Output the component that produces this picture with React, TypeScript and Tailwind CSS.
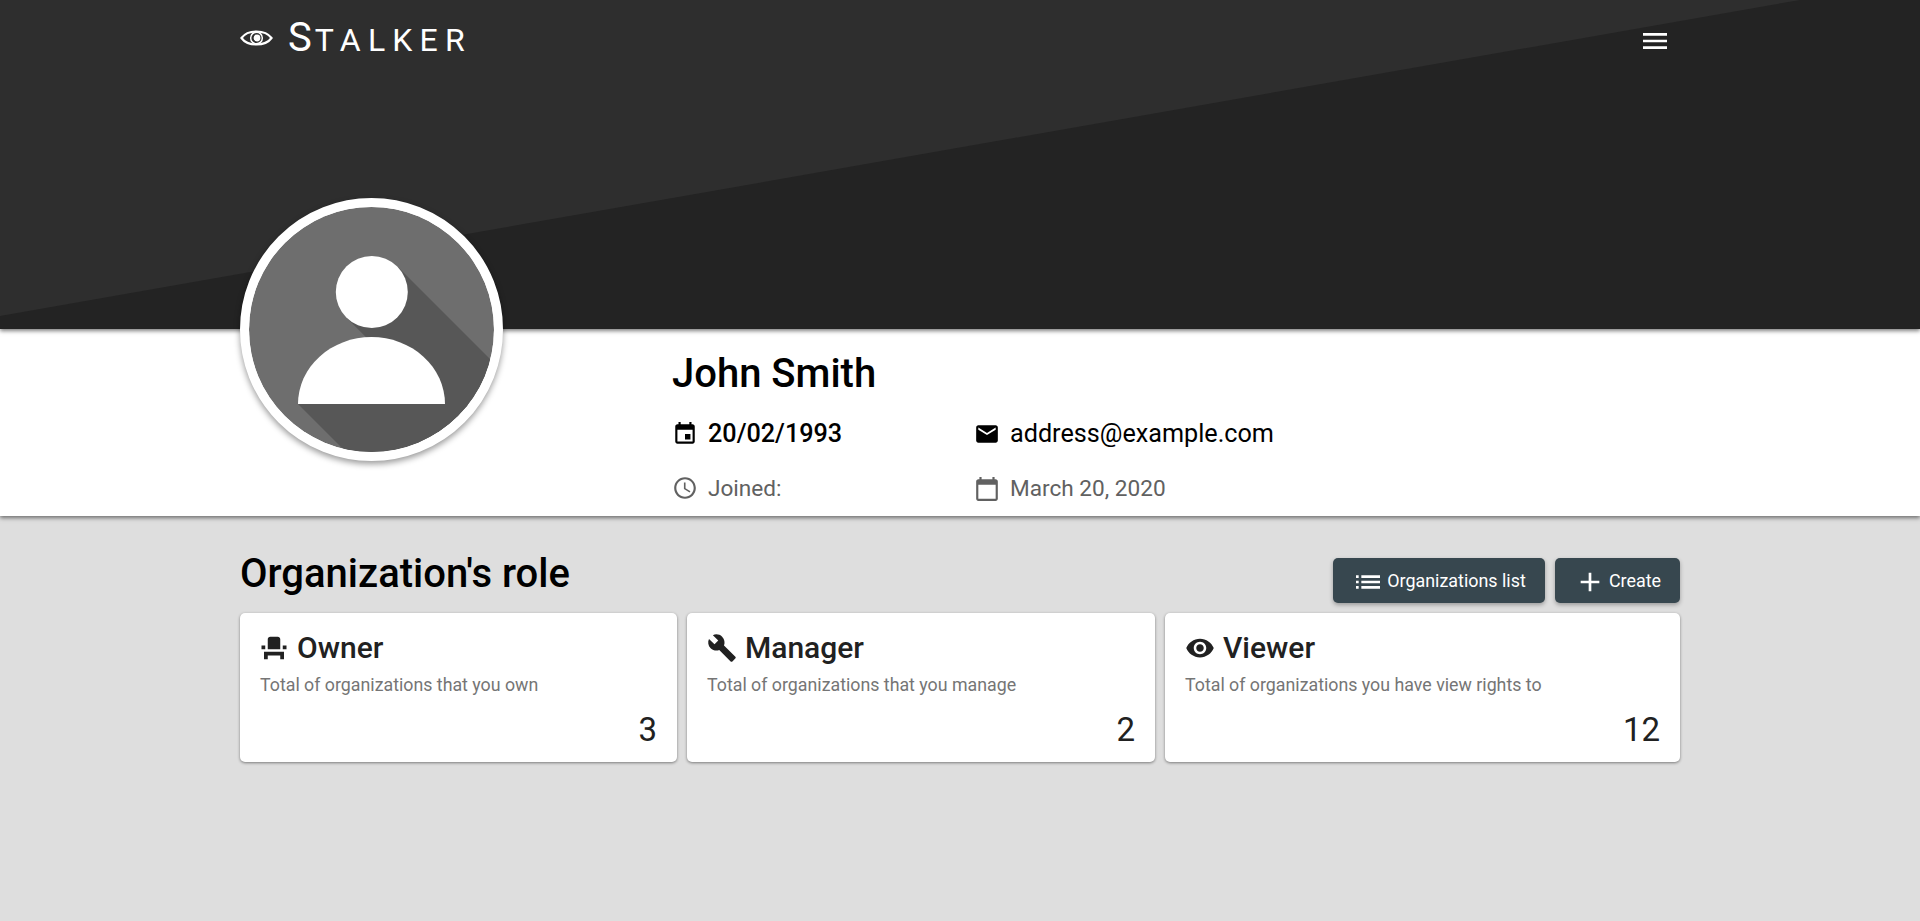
import React from "react";

const P = {
  event: "M17 12h-5v5h5v-5zM16 1v2H8V1H6v2H5c-1.11 0-1.99.9-1.99 2L3 19c0 1.1.89 2 2 2h14c1.1 0 2-.9 2-2V5c0-1.1-.9-2-2-2h-1V1h-2zm3 18H5V8h14v11z",
  email: "M20 4H4c-1.1 0-1.99.9-1.99 2L2 18c0 1.1.9 2 2 2h16c1.1 0 2-.9 2-2V6c0-1.1-.9-2-2-2zm0 4l-8 5-8-5V6l8 5 8-5v2z",
  time: "M11.99 2C6.47 2 2 6.48 2 12s4.47 10 9.99 10C17.52 22 22 17.52 22 12S17.52 2 11.99 2zM12 20c-4.42 0-8-3.58-8-8s3.58-8 8-8 8 3.58 8 8-3.58 8-8 8zM12.5 7H11v6l5.25 3.15.75-1.23-4.5-2.67z",
  today: "M20 3h-1V1h-2v2H7V1H5v2H4c-1.1 0-2 .9-2 2v16c0 1.1.9 2 2 2h16c1.1 0 2-.9 2-2V5c0-1.1-.9-2-2-2zm0 18H4V8h16v13z",
  list: "M3 13h2v-2H3v2zm0 4h2v-2H3v2zm0-8h2V7H3v2zm4 4h14v-2H7v2zm0 4h14v-2H7v2zM7 7v2h14V7H7z",
  add: "M19 13h-6v6h-2v-6H5v-2h6V5h2v6h6v2z",
  build: "M22.7 19l-9.1-9.1c.9-2.3.4-5-1.5-6.9-2-2-5-2.4-7.4-1.3L9 6 6 9 1.6 4.7C.4 7.1.9 10.1 2.9 12.1c1.9 1.9 4.6 2.4 6.9 1.5l9.1 9.1c.4.4 1 .4 1.4 0l2.3-2.3c.5-.4.5-1.1.1-1.4z",
  eye: "M12 4.5C7 4.5 2.73 7.61 1 12c1.73 4.39 6 7.5 11 7.5s9.27-3.11 11-7.5c-1.73-4.39-6-7.5-11-7.5zM12 17c-2.76 0-5-2.24-5-5s2.24-5 5-5 5 2.24 5 5-2.24 5-5 5zm0-8c-1.66 0-3 1.34-3 3s1.34 3 3 3 3-1.34 3-3-1.34-3-3-3z",
  seat: "M4 18v3h3v-3h10v3h3v-6H4zm15-8h3v3h-3zM2 10h3v3H2zm15 3H7V5c0-1.1.9-2 2-2h6c1.1 0 2 .9 2 2v8z",
  menu: "M3 18h18v-2H3v2zm0-5h18v-2H3v2zm0-7v2h18V6H3z",
};

function Icon({ d, className }: { d: string; className: string }) {
  return (
    <svg viewBox="0 0 24 24" fill="currentColor" className={className}>
      <path d={d} />
    </svg>
  );
}

function Avatar() {
  return (
    <div className="w-[263px] h-[263px] rounded-full border-[9px] border-white bg-white shadow-[0_3px_6px_rgba(0,0,0,0.4)] overflow-hidden shrink-0">
      <svg viewBox="249 207 245 245" className="block w-full h-full">
        <defs>
          <clipPath id="av">
            <circle cx="371.5" cy="329.5" r="122.5" />
          </clipPath>
        </defs>
        <circle cx="371.5" cy="329.5" r="122.5" fill="#6e6e6e" />
        <g clipPath="url(#av)" fill="#575757">
          <polygon points="397,266 510,379 510,410 432.8,404 346.3,317.5" />
          <polygon points="298,404 378,484 520,484 520,404 445,404 400,345" />
        </g>
        <circle cx="371.8" cy="292" r="36" fill="#ffffff" />
        <path d="M298 404 A73.5 67 0 0 1 445 404 Z" fill="#ffffff" />
      </svg>
    </div>
  );
}

function Card({ d, title, sub, n, w, ic }: { d: string; title: string; sub: string; n: string; w: string; ic: string }) {
  return (
    <div className={`${w} h-[149px] bg-white rounded-[5px] shadow-[0_1px_3px_rgba(0,0,0,0.45)] pt-[16px] px-5 text-[#212121]`}>
      <div className="flex items-center h-[38px]">
        <Icon d={d} className={`${ic} w-[30px] h-[30px] mr-[8px] shrink-0`} />
        <span className="text-[30px] font-medium leading-none">{title}</span>
      </div>
      <p className="text-[17.8px] leading-6 text-[#757575] mt-[6px]">{sub}</p>
      <p className="text-right text-[33px] leading-10 mt-[13px]">{n}</p>
    </div>
  );
}

export default function App() {
  return (
    <div className="min-h-[921px] bg-[#dedede] font-['Roboto',sans-serif] text-black">
      <header className="relative h-[329px] bg-[#232323] overflow-hidden z-10 shadow-[0_2px_4px_rgba(0,0,0,0.5)]">
        <svg className="absolute inset-0 w-full h-full" viewBox="0 0 1920 329" preserveAspectRatio="none">
          <polygon points="0,0 1800,0 0,316" fill="#2e2e2e" />
        </svg>
        <div className="relative w-[1440px] mx-auto flex items-start justify-between text-white">
          <div className="flex items-center h-[76px]">
            <svg viewBox="0 0 34 20" className="w-[33px] h-[20px] mr-[15px]" fill="none" stroke="#ffffff">
              <path d="M1.5 10 C8 1 26 1 32.5 10 C26 19 8 19 1.5 10 Z" strokeWidth="2.2" />
              <circle cx="17" cy="10" r="6" strokeWidth="1.5" />
              <circle cx="17.5" cy="10" r="3.5" fill="#ffffff" stroke="none" />
            </svg>
            <span className="text-[40px] leading-none">S</span>
            <span className="text-[32px] leading-none tracking-[7.2px] mt-[4px] ml-[3px]">TALKER</span>
          </div>
          <Icon d={P.menu} className="w-[32px] h-[32px] mt-[25px] mr-[9px]" />
        </div>
      </header>

      <section className="relative h-[187px] bg-white shadow-[0_2px_4px_rgba(0,0,0,0.5)]">
        <div className="w-[1440px] mx-auto flex">
          <div className="w-[432px] shrink-0 -mt-[131px] relative z-20">
            <Avatar />
          </div>
          <div className="pt-[21px]">
            <h1 className="text-[40px] font-medium leading-[48px]">John Smith</h1>
            <div className="mt-[20px] grid grid-cols-[302px_auto] gap-y-[23px]">
              <div className="flex items-center h-8 text-[25.2px] font-medium leading-8">
                <Icon d={P.event} className="w-[26px] h-[26px] mr-[10px]" />
                20/02/1993
              </div>
              <div className="flex items-center h-8 text-[25.2px] leading-8">
                <Icon d={P.email} className="w-[26px] h-[26px] mr-[10px]" />
                address@example.com
              </div>
              <div className="flex items-center h-8 text-[22.6px] leading-8 text-[#616161]">
                <Icon d={P.time} className="w-[26px] h-[26px] mr-[10px] -mt-[2px]" />
                Joined:
              </div>
              <div className="flex items-center h-8 text-[22.6px] leading-8 text-[#616161]">
                <Icon d={P.today} className="w-[26px] h-[26px] mr-[10px]" />
                March 20, 2020
              </div>
            </div>
          </div>
        </div>
      </section>

      <main className="w-[1440px] mx-auto">
        <div className="flex justify-between h-[97px]">
          <h2 className="text-[40px] font-medium leading-[48px] mt-[34px]">Organization's role</h2>
          <div className="flex gap-[10px] mt-[42px] text-white text-[17.9px]">
            <button className="w-[212px] h-[45px] pt-[2px] rounded-[5px] bg-[#37474f] shadow-[0_2px_4px_rgba(0,0,0,0.3)] flex items-center justify-center">
              <Icon d={P.list} className="w-[32px] h-[32px] mr-[3px]" />
              Organizations list
            </button>
            <button className="w-[125px] h-[45px] pt-[2px] rounded-[5px] bg-[#37474f] shadow-[0_2px_4px_rgba(0,0,0,0.3)] flex items-center justify-center">
              <Icon d={P.add} className="w-[32px] h-[32px] mr-[3px]" />
              Create
            </button>
          </div>
        </div>
        <div className="flex gap-[10px]">
          <Card d={P.seat} ic="-ml-[1px]" w="w-[437px]" title="Owner" sub="Total of organizations that you own" n="3" />
          <Card d={P.build} ic="" w="w-[468px]" title="Manager" sub="Total of organizations that you manage" n="2" />
          <Card d={P.eye} ic="" w="w-[515px]" title="Viewer" sub="Total of organizations you have view rights to" n="12" />
        </div>
      </main>
    </div>
  );
}
